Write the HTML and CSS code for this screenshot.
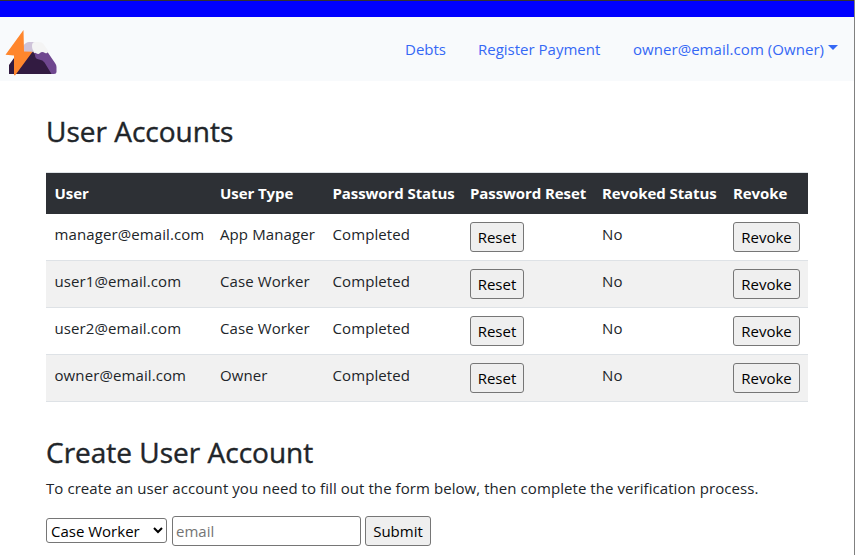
FILE: index.html
```html
<!DOCTYPE html>
<html lang="en">
<head>
<meta charset="utf-8">
<title>User Accounts</title>
<link rel="stylesheet" href="styles.css">
</head>
<body>
<div class="topbar"></div>
<nav class="navbar">
  <a class="brand" href="#">
    <svg width="54" height="48" viewBox="0 0 54 48" aria-hidden="true">
      <path fill="#6f478f" d="M29 24 L34 22.5 L42.500 23 L50 34 Q51.5 36 51.5 38 V43 Q51.5 45 49 45 H40 L28 30Z"/>
      <path fill="#321b41" d="M4 45 V36 L14 22 H28 Q29 24 30 26 Q30 30 34 30.5 Q38 31 39.5 33.500 L46.500 45Z"/>
      <path fill="#cec3d9" d="M18 17 Q21 13 24 13 H33 L29 22 Q27 25 18 23Z"/>
      <path fill="#f4f4f4" d="M30 13 H34 Q37 13 38.500 15 L43 21.500 Q43 25 40 24 Q37 22 35 24 Q33 26 30 23.500 Q27 21 27 17 Q27 13 30 13Z"/>
      <path fill="#ff862d" d="M18.500 1 L19 22.500 L27.500 22.700 L10 46.500 L9 46 V26.500 L0.500 25.700Z"/>
    </svg>
  </a>
  <div class="nav-links">
    <a class="debts" href="#">Debts</a>
    <a class="payment" href="#">Register Payment</a>
    <a class="account" href="#"><span class="address">owner@email.com (Owner)</span><span class="caret"></span></a>
  </div>
</nav>
<main>
  <h2 class="accounts-title">User Accounts</h2>
  <table>
    <colgroup><col class="c-user"><col class="c-type"><col class="c-status"><col class="c-reset"><col class="c-revoked"><col class="c-revoke"></colgroup>
    <thead>
      <tr><th>User</th><th>User Type</th><th>Password Status</th><th>Password Reset</th><th>Revoked Status</th><th>Revoke</th></tr>
    </thead>
    <tbody>
      <tr><td>manager@email.com</td><td>App Manager</td><td>Completed</td><td><button class="reset">Reset</button></td><td>No</td><td><button class="revoke">Revoke</button></td></tr>
      <tr><td>user1@email.com</td><td>Case Worker</td><td>Completed</td><td><button class="reset">Reset</button></td><td>No</td><td><button class="revoke">Revoke</button></td></tr>
      <tr><td>user2@email.com</td><td>Case Worker</td><td>Completed</td><td><button class="reset">Reset</button></td><td>No</td><td><button class="revoke">Revoke</button></td></tr>
      <tr><td>owner@email.com</td><td>Owner</td><td>Completed</td><td><button class="reset">Reset</button></td><td>No</td><td><button class="revoke">Revoke</button></td></tr>
    </tbody>
  </table>
  <h2 class="create-title">Create User Account</h2>
  <p class="intro">To create an user account you need to fill out the form below, then complete the verification process.</p>
  <form>
    <select><option>Case Worker</option></select>
    <input type="text" placeholder="email">
    <button class="submit" type="button">Submit</button>
  </form>
</main>
</body>
</html>
```

FILE: styles.css
```css
* { box-sizing: border-box; }
html { height: 100%; }
body {
  margin: 0;
  height: 555px;
  overflow: hidden;
  border-right: 1px solid #808080;
  background: #fff;
  color: #212529;
  font: 400 15px/24px "Open Sans", "Noto Sans", sans-serif;
}
.topbar { height: 17px; background: #00f; border-top: 1px solid #333; }
.navbar {
  display: flex;
  justify-content: space-between;
  align-items: center;
  height: 64px;
  padding: 0 16px 0 5px;
  background: #f8fafc;
}
.brand { display: flex; margin-top: 8px; }
.nav-links { display: flex; gap: 32px; }
.nav-links a { display: flex; align-items: center; color: #3568f5; text-decoration: none; white-space: nowrap; }
.debts { width: 41px; }
.payment { width: 123px; }
.account { width: 205px; justify-content: space-between; letter-spacing: 0.05px; }
.caret { margin-top: -3px; border: 5px solid transparent; border-top-color: #3568f5; border-bottom: 0; }
main { padding: 33px 46px 0; }
h2 { margin: 0; font-size: 28px; font-weight: 500; line-height: 34px; white-space: nowrap; -webkit-text-stroke: 0.4px currentColor; }
table { width: 762px; margin-top: 24px; table-layout: fixed; border-collapse: separate; border-spacing: 0; }
.c-user { width: 166px; }
.c-type { width: 112.5px; }
.c-status { width: 137.5px; }
.c-reset { width: 132px; }
.c-revoked { width: 131px; }
.c-revoke { width: 83px; }
th, td { padding: 8px; text-align: left; vertical-align: top; white-space: nowrap; }
th { height: 42px; background: #2d3035; color: #fff; border-top: 1px solid #dee2e6; font-weight: 700; letter-spacing: -0.08px; }
td { height: 47px; padding-bottom: 0; border-bottom: 1px solid #dee2e6; letter-spacing: 0.1px; }
td:first-child, th:first-child { padding-left: 8.5px; }
tbody tr:nth-child(even) { background: #f1f1f1; }
button, input, select { margin: 0; font: inherit; border: 1px solid #767676; border-radius: 3px; }
button { display: block; height: 30px; padding: 0; background: #efefef; color: #000; text-align: center; }
.reset { width: 54px; }
.revoke { width: 67px; }
.create-title { margin-top: 33px; }
.intro { margin: 7px 0 0; white-space: nowrap; letter-spacing: 0.067px; }
form { display: flex; align-items: center; margin-top: 16px; }
select { width: 121px; height: 25px; margin-bottom: 1px; padding: 0; background: #fff; color: #000; line-height: normal; }
input { width: 189px; height: 30px; margin-left: 5px; padding: 1px 3px; }
input::placeholder { color: #757575; }
.submit { width: 66px; margin-left: 4px; }
```
